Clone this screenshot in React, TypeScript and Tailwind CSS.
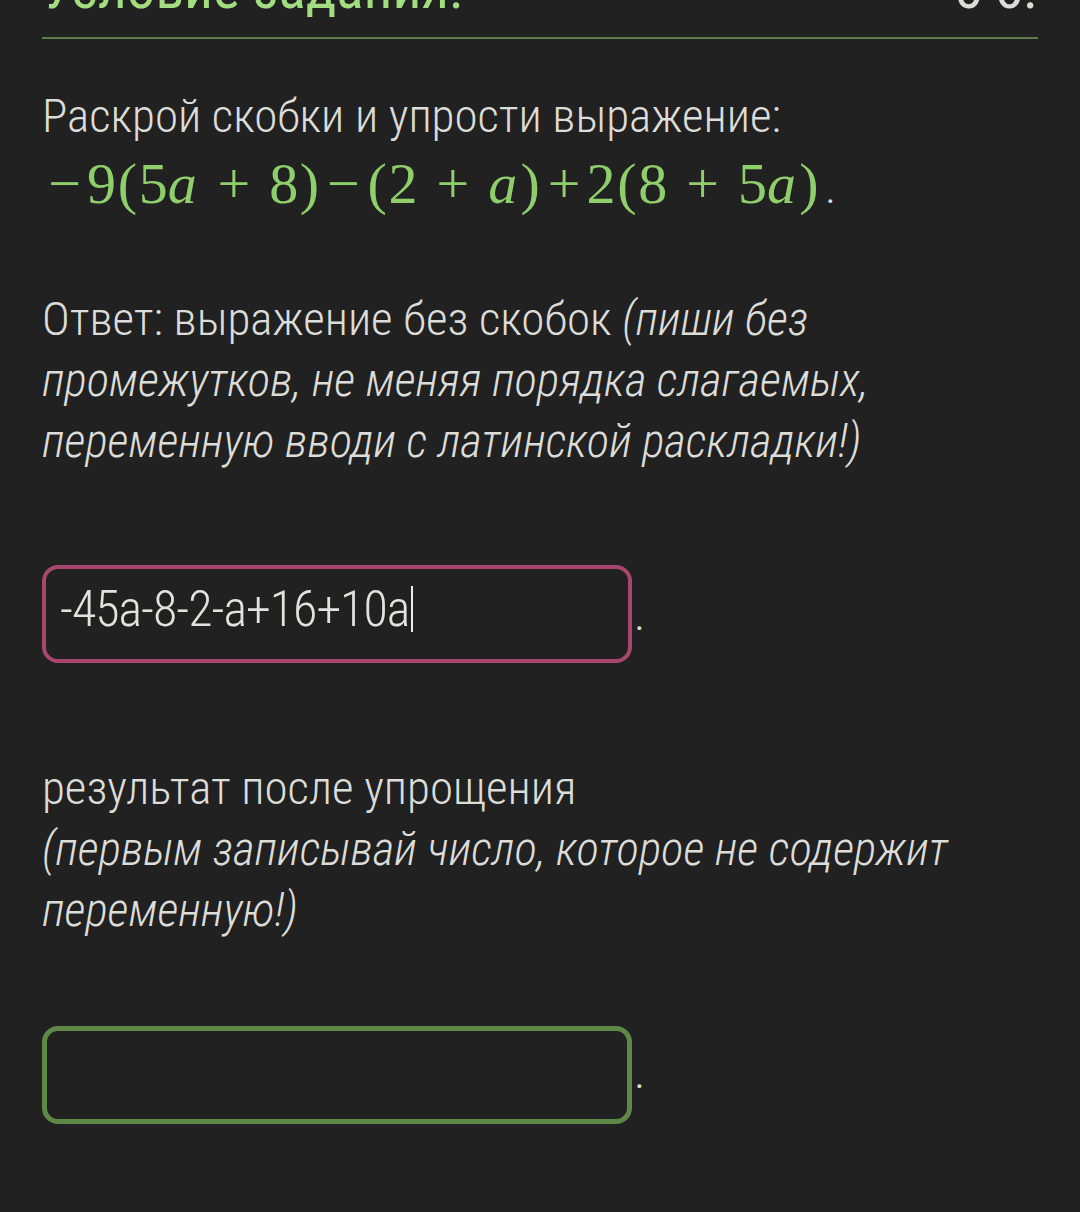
const body = "font-['Roboto_Condensed','Roboto',sans-serif] font-light";

function Op({ ch, bin }: { ch: string; bin?: boolean }) {
  return (
    <span className={"inline-block w-[0.778em] text-center " + (bin ? "mx-[0.222em]" : "")}>{ch}</span>
  );
}

function Paren({ ch }: { ch: string }) {
  return <span className="inline-block w-[0.389em] text-center">{ch}</span>;
}

function A() {
  return <i className="inline-block w-[0.529em]">a</i>;
}

function AnswerBox({ tone, children, dotGap }: { tone: "pink" | "green"; children?: React.ReactNode; dotGap: string }) {
  return (
    <div className="flex items-end">
      <div
        className={
          "flex h-[98px] w-[590px] items-center rounded-[16px] pl-[14px] " +
          (tone === "pink" ? "border-[4px] border-[#a9466f]" : "border-[5px] border-[#5d8846]")
        }
      >
        {children}
      </div>
      <span className={"ml-[2px] text-[47px] leading-none text-[#dcdcd8] " + dotGap}>.</span>
    </div>
  );
}

export default function App() {
  return (
    <div className={"min-h-[1212px] overflow-hidden bg-[#212121] px-[42px] text-[#dcdcd8] " + body}>
      {/* header, partly scrolled away */}
      <div className="-mt-[42px] flex items-baseline justify-between text-[57px] leading-[61px]">
        <span className="font-normal text-[#a2de80]">Условие задания:</span>
        <span className="font-normal text-[#dcdcd8]">5 б.</span>
      </div>
      <div className="mt-[18px] h-[2px] bg-[#5b7e46]" />

      <p className="mt-[46px] text-[47px] leading-[61px]">Раскрой скобки и упрости выражение:</p>
      <p className="mt-[3px] h-[70px] whitespace-nowrap font-['Liberation_Serif',serif] text-[58px] font-normal leading-[70px] text-[#8fcf6b]">
        <Op ch="−" />9<Paren ch="(" />5<A />
        <Op ch="+" bin />8<Paren ch=")" />
        <Op ch="−" />
        <Paren ch="(" />2<Op ch="+" bin />
        <A />
        <Paren ch=")" />
        <Op ch="+" />2<Paren ch="(" />8<Op ch="+" bin />5<A />
        <Paren ch=")" />
        <span className="ml-[6px] text-[32px] leading-none text-[#dcdcd8]">.</span>
      </p>

      <p className="mt-[69px] whitespace-nowrap text-[47px] leading-[61px]">
        Ответ: выражение без скобок <i>(пиши без</i>
        <br />
        <i>промежутков, не меняя порядка слагаемых,</i>
        <br />
        <i>переменную вводи с латинской раскладки!)</i>
      </p>

      <div className="mt-[94px]">
        <AnswerBox tone="pink" dotGap="mb-[26px]">
          <span className="flex items-center pb-[10px] text-[50px] leading-none tracking-[-1px] text-[#e2e2de]">
            -45a-8-2-a+16+10a
            <span className="ml-[2px] inline-block h-[46px] w-[2px] bg-[#ececec]" />
          </span>
        </AnswerBox>
      </div>

      <p className="mt-[94px] whitespace-nowrap text-[47px] leading-[61px]">
        результат после упрощения
        <br />
        <i>(первым записывай число, которое не содержит</i>
        <br />
        <i>переменную!)</i>
      </p>

      <div className="mt-[86px]">
        <AnswerBox tone="green" dotGap="mb-[29px]" />
      </div>
    </div>
  );
}
